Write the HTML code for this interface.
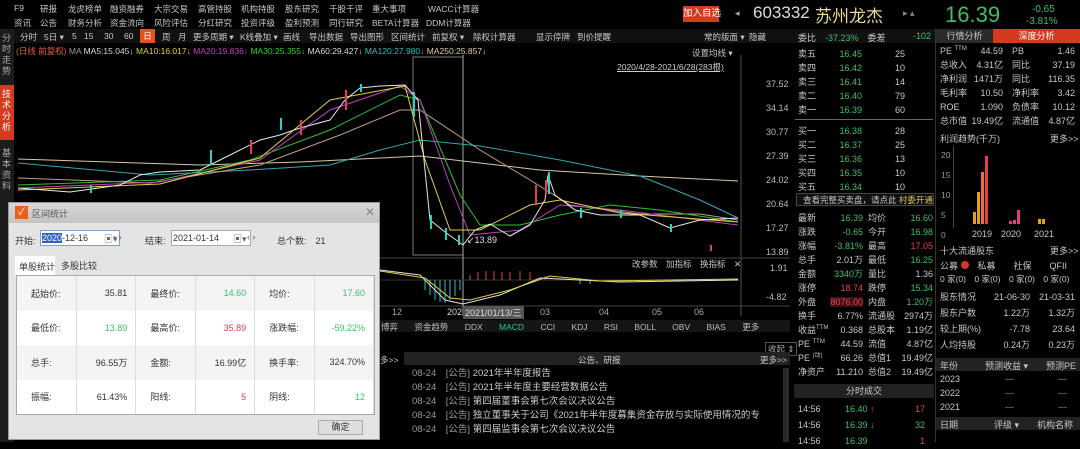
<!DOCTYPE html>
<html><head><meta charset="utf-8"><style>
*{margin:0;padding:0;box-sizing:border-box}
body{width:1080px;height:442px;background:#000;overflow:hidden;position:relative;font-family:"Liberation Sans","Noto Sans CJK SC",sans-serif;font-size:9px;color:#c8c8c8}
.a{position:absolute;white-space:nowrap}
.g{color:#3fbf6a}.r{color:#e8404a}.w{color:#d8d8d8}.y{color:#d8c850}.gr{color:#9a9a9a}
.rt{text-align:right}
sup{font-size:6px;line-height:0;vertical-align:4px}
.m{font-size:8.5px}
table{table-layout:fixed}
td{padding:0 8px 0 14px;border-right:1px solid #ddd}
</style></head><body>
<!-- top menus -->
<div class="a m" style="left:14px;top:3px">F9</div>
<div class="a m" style="left:40px;top:3px">研报</div><div class="a m" style="left:68px;top:3px">龙虎榜单</div><div class="a m" style="left:110px;top:3px">融资融券</div><div class="a m" style="left:154px;top:3px">大宗交易</div><div class="a m" style="left:198px;top:3px">高管持股</div><div class="a m" style="left:241px;top:3px">机构持股</div><div class="a m" style="left:285px;top:3px">股东研究</div><div class="a m" style="left:329px;top:3px">千股千评</div><div class="a m" style="left:372px;top:3px">重大事项</div><div class="a m" style="left:428px;top:3px">WACC计算器</div>
<div class="a m" style="left:14px;top:17px">资讯</div><div class="a m" style="left:40px;top:17px">公告</div><div class="a m" style="left:68px;top:17px">财务分析</div><div class="a m" style="left:110px;top:17px">资金流向</div><div class="a m" style="left:154px;top:17px">风险评估</div><div class="a m" style="left:198px;top:17px">分红研究</div><div class="a m" style="left:241px;top:17px">投资评级</div><div class="a m" style="left:285px;top:17px">盈利预测</div><div class="a m" style="left:329px;top:17px">同行研究</div><div class="a m" style="left:372px;top:17px">BETA计算器</div><div class="a m" style="left:426px;top:17px">DDM计算器</div>
<div class="a" style="left:683px;top:6px;width:36px;height:16px;background:#d33a1e;color:#fff;font-size:9.5px;line-height:16px;text-align:center">加入自选</div>
<div class="a" style="left:735px;top:8px;color:#aaa">◂</div>
<div class="a" style="left:753px;top:3px;font-size:17px;color:#ddd">603332</div>
<div class="a" style="left:815px;top:2px;font-size:17px;color:#e6d890">苏州龙杰</div>
<div class="a" style="left:903px;top:8px;color:#888">▸ ▴</div>
<div class="a g" style="left:945px;top:2px;font-size:22px">16.39</div>
<div class="a g" style="left:1032px;top:4px;font-size:10px">-0.65</div>
<div class="a g" style="left:1026px;top:16px;font-size:10px">-3.81%</div>
<!-- sidebar -->
<div class="a" style="left:0;top:29px;width:14px;height:413px;background:#1c1c1c"></div>
<div class="a" style="left:2px;top:33px;width:10px;font-size:9px;line-height:11px;white-space:normal;color:#aaa">分时走势</div>
<div class="a" style="left:0;top:85px;width:14px;height:55px;background:#d33a1e"></div>
<div class="a" style="left:2px;top:89px;width:10px;line-height:11px;white-space:normal;color:#fff">技术分析</div>
<div class="a" style="left:2px;top:148px;width:10px;line-height:11px;white-space:normal;color:#aaa">基本资料</div>
<!-- toolbar -->
<div class="a" style="left:14px;top:29px;width:776px;height:14px;background:#111"></div>
<div class="a m" style="left:20px;top:31px">分时</div><div class="a m" style="left:44px;top:31px">5日 ▾</div><div class="a m" style="left:72px;top:31px">5</div><div class="a m" style="left:84px;top:31px">15</div><div class="a m" style="left:104px;top:31px">30</div><div class="a m" style="left:124px;top:31px">60</div>
<div class="a m" style="left:140px;top:29px;width:15px;height:14px;background:#e8501e;color:#fff;text-align:center;line-height:14px">日</div>
<div class="a m" style="left:162px;top:31px">周</div><div class="a m" style="left:178px;top:31px">月</div>
<div class="a m" style="left:193px;top:31px">更多周期 ▾</div><div class="a m" style="left:240px;top:31px">K线叠加 ▾</div><div class="a m" style="left:283px;top:31px">画线</div><div class="a m" style="left:309px;top:31px">导出数据</div><div class="a m" style="left:350px;top:31px">导出图形</div><div class="a m" style="left:391px;top:31px">区间统计</div><div class="a m" style="left:432px;top:31px">前复权 ▾</div><div class="a m" style="left:473px;top:31px">除权计算器</div><div class="a m" style="left:536px;top:31px">显示停牌</div><div class="a m" style="left:577px;top:31px">到价提醒</div>
<div class="a m" style="left:704px;top:31px">常的版面 ▾</div><div class="a m" style="left:749px;top:31px">隐藏</div>
<!-- MA line -->
<div class="a" style="left:16px;top:45px;font-size:8.5px"><span style="color:#e0603a">(日线 前复权)</span> <span class="gr">MA</span> <span class="w">MA5:15.045↓</span> <span style="color:#e0d040">MA10:16.017↓</span> <span style="color:#c040c0">MA20:19.836↓</span> <span style="color:#30d030">MA30:25.355↓</span> <span class="w">MA60:29.427↓</span> <span style="color:#30c0c0">MA120:27.980↓</span> <span style="color:#e0d0a0">MA250:25.857↓</span></div>
<div class="a m" style="left:692px;top:47px">设置均线 ▾</div>
<div class="a m" style="left:617px;top:61px;text-decoration:underline;color:#ccc">2020/4/28-2021/6/28(283根)</div>
<!-- chart svg -->
<svg class="a" style="left:14px;top:55px" width="776" height="265" viewBox="14 55 776 265">
<line x1="741" y1="55" x2="741" y2="316" stroke="#555" stroke-width="1"/>
<line x1="14" y1="258" x2="790" y2="258" stroke="#444"/>
<line x1="14" y1="306" x2="790" y2="306" stroke="#444"/>
<rect x="413" y="57" width="50" height="198" fill="none" stroke="#777"/>
<line x1="463" y1="55" x2="463" y2="316" stroke="#aaa"/>
<polyline fill="none" stroke="#d8c8a0" stroke-width="1" points="18,159 200,165 300,162 380,158 420,156 540,170 640,176 738,181"/>
<polyline fill="none" stroke="#30a8b0" stroke-width="1" points="18,163 150,175 250,170 330,165 380,150 420,140 480,146 560,160 640,176 700,200 738,218"/>
<polyline fill="none" stroke="#c0a080" stroke-width="1" points="18,178 150,183 260,165 340,135 400,110 420,110 480,150 530,180 570,205 640,214 700,214 738,220"/>
<polyline fill="none" stroke="#30c030" stroke-width="1" points="18,185 160,180 250,160 330,130 400,95 420,100 460,195 480,225 520,225 560,215 610,205 660,210 738,222"/>
<polyline fill="none" stroke="#c040c0" stroke-width="1" points="18,188 160,182 260,160 330,110 400,86 420,100 450,185 470,235 520,230 560,205 620,210 738,225"/>
<polyline fill="none" stroke="#e0d040" stroke-width="1" points="18,190 160,184 260,158 330,100 405,86 425,160 450,230 480,230 530,205 560,200 620,213 738,222"/>
<polyline fill="none" stroke="#e8e8e8" stroke-width="1" points="18,188 70,192 120,185 140,175 160,172 200,170 230,155 260,140 280,135 300,128 330,120 345,100 360,88 380,86 405,85 418,100 430,220 445,232 463,245 475,230 490,224 510,236 530,225 545,200 548,175 555,195 575,210 600,215 640,215 670,228 700,220 738,218"/>
<g fill="#30d0c0">
<rect x="413" y="92" width="2" height="25"/><rect x="430" y="215" width="2" height="14"/><rect x="445" y="228" width="2" height="12"/><rect x="458" y="235" width="2" height="10"/><rect x="548" y="172" width="2" height="22"/><rect x="580" y="208" width="2" height="10"/><rect x="620" y="210" width="2" height="8"/><rect x="670" y="224" width="2" height="8"/><rect x="210" y="150" width="2" height="15"/><rect x="280" y="118" width="2" height="12"/><rect x="360" y="84" width="2" height="8"/><rect x="90" y="185" width="2" height="8"/>
</g>
<g fill="#e04050">
<rect x="535" y="185" width="2" height="20"/><rect x="545" y="180" width="2" height="15"/><rect x="300" y="120" width="2" height="15"/><rect x="345" y="90" width="2" height="20"/><rect x="250" y="140" width="2" height="14"/><rect x="710" y="245" width="2" height="6"/>
</g>
<text x="467" y="243" fill="#ddd" font-size="9" font-family="Liberation Sans">↙13.89</text>
<line x1="14" y1="280" x2="741" y2="280" stroke="#333"/>
<g stroke="#30c0c0" stroke-width="1">
<line x1="425" y1="280" x2="425" y2="290"/><line x1="430" y1="280" x2="430" y2="295"/><line x1="435" y1="280" x2="435" y2="300"/><line x1="440" y1="280" x2="440" y2="302"/><line x1="445" y1="280" x2="445" y2="303"/><line x1="450" y1="280" x2="450" y2="300"/><line x1="455" y1="280" x2="455" y2="296"/><line x1="460" y1="280" x2="460" y2="290"/><line x1="580" y1="280" x2="580" y2="284"/><line x1="590" y1="280" x2="590" y2="284"/>
</g>
<g stroke="#e04050" stroke-width="1">
<line x1="470" y1="280" x2="470" y2="275"/><line x1="478" y1="280" x2="478" y2="272"/><line x1="486" y1="280" x2="486" y2="271"/><line x1="494" y1="280" x2="494" y2="271"/><line x1="502" y1="280" x2="502" y2="272"/><line x1="510" y1="280" x2="510" y2="272"/><line x1="520" y1="280" x2="520" y2="271"/><line x1="530" y1="280" x2="530" y2="272"/><line x1="545" y1="280" x2="545" y2="276"/>
</g>
<polyline fill="none" stroke="#e0e0e0" points="380,270 420,275 445,300 463,304 500,295 540,278 560,279 620,282 738,280"/>
<polyline fill="none" stroke="#e0d040" points="380,271 425,278 450,298 470,300 510,290 550,276 600,281 738,279"/>
</svg>
<div class="a" style="left:766px;top:72px;line-height:24px;color:#bbb">37.52<br>34.14<br>30.77<br>27.39<br>24.02<br>20.64<br>17.27<br>13.89</div>
<div class="a" style="left:770px;top:263px;color:#bbb">1.91</div><div class="a" style="left:766px;top:292px;color:#bbb">-4.82</div>
<div class="a m" style="left:632px;top:258px">改参数　加指标　换指标　✕</div>
<div class="a" style="left:392px;top:307px;color:#aaa">12</div>
<div class="a" style="left:447px;top:307px;color:#ddd">202</div>
<div class="a" style="left:463px;top:306px;background:#555;color:#ddd;padding:0 2px">2021/01/13/三</div>
<div class="a" style="left:540px;top:307px;color:#aaa">03</div><div class="a" style="left:599px;top:307px;color:#aaa">04</div><div class="a" style="left:652px;top:307px;color:#aaa">05</div><div class="a" style="left:694px;top:307px;color:#aaa">06</div>
<div class="a" style="left:380px;top:320px;width:410px;height:12px;background:#151515"></div>
<div class="a m" style="left:381px;top:321px;word-spacing:14px;color:#bbb">博弈 资金趋势 DDX <span style="color:#30c0a0">MACD</span> CCI KDJ RSI BOLL OBV BIAS 更多</div>
<div class="a m" style="left:765px;top:342px;border:1px solid #555;padding:0 2px;color:#aaa">收起 ⇕</div>
<!-- announcements -->
<div class="a" style="left:404px;top:352px;width:386px;height:13px;background:#222"></div>
<div class="a m" style="left:578px;top:354px">公告、研报</div><div class="a m" style="left:760px;top:354px">更多>></div>
<div class="a m" style="left:380px;top:354px">多>></div>
<div class="a" style="left:412px;top:367px;line-height:14px;font-size:9.5px;color:#ccc">
<div><span class="gr">08-24　[公告]</span> 2021年半年度报告</div>
<div><span class="gr">08-24　[公告]</span> 2021年半年度主要经营数据公告</div>
<div><span class="gr">08-24　[公告]</span> 第四届董事会第七次会议决议公告</div>
<div><span class="gr">08-24　[公告]</span> 独立董事关于公司《2021年半年度募集资金存放与实际使用情况的专</div>
<div><span class="gr">08-24　[公告]</span> 第四届监事会第七次会议决议公告</div>
</div>
<div class="a" style="left:783px;top:368px;width:6px;height:74px;background:#2a2a2a"></div>
<!-- dialog -->
<div class="a" style="left:8px;top:202px;width:372px;height:238px;background:#e4e4e4;border:1px solid #999;color:#333;font-size:9px">
 <div style="height:20px;background:linear-gradient(#d8d8d8,#c4c4c4);position:relative">
  <div class="a" style="left:6px;top:3px;width:13px;height:13px;background:#e8601e;color:#fff;font-size:10px;line-height:13px;text-align:center">✓</div>
  <div class="a" style="left:23px;top:4px;color:#555">区间统计</div>
  <div class="a" style="left:356px;top:2px;color:#888;font-size:12px">✕</div>
 </div>
 <div class="a" style="left:6px;top:31px">开始:</div>
 <div class="a" style="left:31px;top:27px;width:80px;height:16px;background:#fff;border:1px solid #7aa0d0"></div>
 <div class="a" style="left:33px;top:30px"><span style="background:#3060c0;color:#fff">2020</span>-12-16</div>
 <div class="a" style="left:95px;top:29px;color:#666">▣▾</div>
 <div class="a" style="left:104px;top:29px;color:#555">‹ ›</div>
 <div class="a" style="left:136px;top:31px">结束:</div>
 <div class="a" style="left:162px;top:27px;width:80px;height:16px;background:#fff;border:1px solid #aaa"></div>
 <div class="a" style="left:164px;top:30px">2021-01-14</div>
 <div class="a" style="left:224px;top:29px;color:#666">▣▾</div>
 <div class="a" style="left:238px;top:29px;color:#555">‹ ›</div>
 <div class="a" style="left:268px;top:31px">总个数:　21</div>
 <div class="a" style="left:6px;top:53px;width:40px;height:19px;background:#fff;padding:4px 0 0 4px">单股统计</div>
 <div class="a" style="left:52px;top:56px">多股比较</div>
 <div class="a" style="left:7px;top:72px;width:359px;height:140px;background:#fff;border:1px solid #aaa">
 <table style="border-collapse:collapse;width:100%;height:100%;font-size:9px">
  <tr style="background:#f4f4f4"><td>起始价:</td><td class="rt">35.81</td><td>最终价:</td><td class="rt g">14.60</td><td>均价:</td><td class="rt g">17.60</td></tr>
  <tr><td>最低价:</td><td class="rt g">13.89</td><td>最高价:</td><td class="rt r">35.89</td><td>涨跌幅:</td><td class="rt g">-59.22%</td></tr>
  <tr style="background:#f4f4f4"><td>总手:</td><td class="rt">96.55万</td><td>金额:</td><td class="rt">16.99亿</td><td>换手率:</td><td class="rt">324.70%</td></tr>
  <tr><td>振幅:</td><td class="rt">61.43%</td><td>阳线:</td><td class="rt r">5</td><td>阴线:</td><td class="rt g">12</td></tr>
 </table></div>
 <div class="a" style="left:309px;top:217px;width:45px;height:15px;background:#ddd;border:1px solid #aaa;text-align:center;line-height:13px">确定</div>
</div>
<!-- order book -->
<div class="a" style="left:790px;top:29px;width:145px;height:14px;background:#111"></div>
<div class="a" style="left:798px;top:31px">委比　<span class="g">-37.23%</span>　委差</div><div class="a g" style="left:913px;top:31px">-102</div>
<div class="a" style="left:798px;top:47px;line-height:14px">卖五<br>卖四<br>卖三<br>卖二<br>卖一</div>
<div class="a g rt" style="left:830px;top:47px;width:32px;line-height:14px">16.45<br>16.42<br>16.41<br>16.40<br>16.39</div>
<div class="a rt" style="left:885px;top:47px;width:20px;line-height:14px">25<br>10<br>14<br>79<br>60</div>
<div class="a" style="left:795px;top:119px;width:138px;height:1px;background:#666"></div>
<div class="a" style="left:798px;top:124px;line-height:14px">买一<br>买二<br>买三<br>买四<br>买五</div>
<div class="a g rt" style="left:830px;top:124px;width:32px;line-height:14px">16.38<br>16.37<br>16.36<br>16.35<br>16.34</div>
<div class="a rt" style="left:885px;top:124px;width:20px;line-height:14px">28<br>25<br>13<br>10<br>10</div>
<div class="a" style="left:796px;top:193px;width:138px;height:13px;border:1px solid #444;background:#111;font-size:8.5px;padding-left:6px">查看完整买卖盘，请点此 <span class="y">村委开通</span></div>
<div class="a" style="left:798px;top:211px;line-height:14px">最新<br>涨跌<br>涨幅<br>总手<br>金额<br>涨停<br>外盘<br>换手<br>收益<sup>TTM</sup><br>PE <sup>TTM</sup><br>PE <sup>(动)</sup><br>净资产</div>
<div class="a rt" style="left:825px;top:211px;width:38px;line-height:14px"><span class="g">16.39</span><br><span class="g">-0.65</span><br><span class="g">-3.81%</span><br>2.01万<br><span class="g">3340万</span><br><span class="r">18.74</span><br><span class="r" style="background:#401018">8076.00</span><br>6.77%<br>0.368<br>44.59<br>66.26<br>11.210</div>
<div class="a" style="left:868px;top:211px;line-height:14px">均价<br>今开<br>最高<br>最低<br>量比<br>跌停<br>内盘<br>流通股<br>总股本<br>流值<br>总值1<br>总值2</div>
<div class="a rt" style="left:895px;top:211px;width:38px;line-height:14px"><span class="g">16.60</span><br><span class="g">16.98</span><br><span class="r">17.05</span><br><span class="g">16.25</span><br>1.36<br><span class="g">15.34</span><br><span class="g">1.20万</span><br>2974万<br>1.19亿<br>4.87亿<br>19.49亿<br>19.49亿</div>
<div class="a" style="left:794px;top:384px;width:140px;height:14px;background:#222;text-align:center;line-height:14px">分时成交</div>
<div class="a" style="left:798px;top:401px;line-height:16px">14:56<br>14:56<br>14:56</div>
<div class="a g" style="left:845px;top:401px;line-height:16px">16.40 <span class="r">↑</span><br>16.39 ↓<br>16.39</div>
<div class="a r rt" style="left:905px;top:401px;width:20px;line-height:16px">17<br><span class="g">32</span><br>1</div>
<div class="a" style="left:935px;top:29px;width:1px;height:413px;background:#333"></div>
<!-- far right -->
<div class="a" style="left:936px;top:29px;width:57px;height:14px;background:#2a2a2a;text-align:center;line-height:14px">行情分析</div>
<div class="a" style="left:993px;top:29px;width:87px;height:14px;background:#d33a1e;color:#fff;text-align:center;line-height:14px">深度分析</div>
<div class="a" style="left:940px;top:44px;line-height:14px">PE <sup>TTM</sup><br>总收入<br>净利润<br>毛利率<br>ROE<br>总市值</div>
<div class="a rt" style="left:965px;top:44px;width:38px;line-height:14px">44.59<br>4.31亿<br>1471万<br>10.50<br>1.090<br>19.49亿</div>
<div class="a" style="left:1012px;top:44px;line-height:14px">PB<br>同比<br>同比<br>净利率<br>负债率<br>流通值</div>
<div class="a rt" style="left:1035px;top:44px;width:40px;line-height:14px">1.46<br>37.19<br>116.35<br>3.42<br>10.12<br>4.87亿</div>
<div class="a" style="left:940px;top:132px">利润趋势(千万)</div><div class="a" style="left:1050px;top:132px">更多>></div>
<div class="a gr" style="left:941px;top:145px;line-height:20px;font-size:8.5px">20<br>15<br>10<br>5<br>0</div>
<div class="a" style="left:953px;top:146px;width:1px;height:82px;background:#444"></div>
<div class="a" style="left:973px;top:212px;width:3px;height:12px;background:#e0a020"></div>
<div class="a" style="left:977px;top:192px;width:3px;height:32px;background:#e0a020"></div>
<div class="a" style="left:981px;top:172px;width:3px;height:52px;background:#f07030"></div>
<div class="a" style="left:985px;top:156px;width:3px;height:68px;background:#e84040"></div>
<div class="a" style="left:1009px;top:221px;width:3px;height:3px;background:#e04080"></div>
<div class="a" style="left:1013px;top:220px;width:3px;height:4px;background:#e04080"></div>
<div class="a" style="left:1017px;top:210px;width:3px;height:14px;background:#e04080"></div>
<div class="a" style="left:1038px;top:219px;width:3px;height:5px;background:#e0a020"></div>
<div class="a" style="left:1042px;top:219px;width:3px;height:5px;background:#e0a020"></div>
<div class="a" style="left:972px;top:229px">2019</div><div class="a" style="left:1001px;top:229px">2020</div><div class="a" style="left:1034px;top:229px">2021</div>
<div class="a" style="left:940px;top:244px">十大流通股东</div><div class="a" style="left:1050px;top:244px">更多>></div>
<div class="a" style="left:940px;top:259px">公募 <span style="display:inline-block;width:8px;height:8px;border-radius:4px;background:#e03030"></span>　私募　　社保　　QFII</div>
<div class="a" style="left:940px;top:273px;font-size:8.5px">0 家(0)　0 家(0)　0 家(0)　0 家(0)</div>
<div class="a" style="left:940px;top:289px;line-height:16px">股东情况<br>股东户数<br>较上期(%)<br>人均持股</div>
<div class="a rt" style="left:985px;top:289px;width:45px;line-height:16px">21-06-30<br>1.22万<br>-7.78<br>0.24万</div>
<div class="a rt" style="left:1030px;top:289px;width:45px;line-height:16px">21-03-31<br>1.32万<br>23.64<br>0.23万</div>
<div class="a" style="left:936px;top:358px;width:144px;height:13px;background:#222"></div>
<div class="a" style="left:940px;top:359px">年份　　　预测收益 ▾　　预测PE</div>
<div class="a" style="left:940px;top:372px;line-height:14px">2023<br>2022<br>2021</div>
<div class="a gr" style="left:1005px;top:372px;line-height:14px">---<br>---<br>---</div>
<div class="a gr" style="left:1058px;top:372px;line-height:14px">---<br>---<br>---</div>
<div class="a" style="left:936px;top:417px;width:144px;height:13px;background:#222"></div>
<div class="a" style="left:940px;top:418px">日期　　　　评级 ▾　　机构名称</div>
</body></html>
